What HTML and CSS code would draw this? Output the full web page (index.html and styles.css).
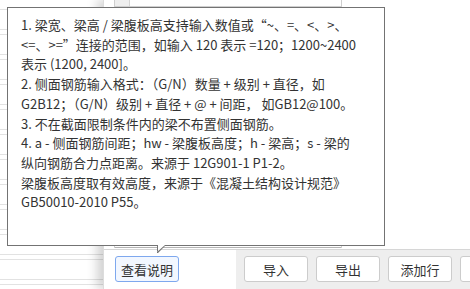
FILE: index.html
```html
<!DOCTYPE html>
<html lang="zh-CN">
<head>
    <meta charset="UTF-8">
    <title>侧面钢筋设置</title>
    <link rel="stylesheet" href="styles.css">
</head>
<body>
    <div class="page">
        <!-- 左侧表格 -->
        <div class="list">
            <div class="row"></div><div class="row"></div><div class="row"></div><div class="row"></div>
            <div class="row"></div><div class="row"></div><div class="row"></div><div class="row"></div>
            <div class="row"></div><div class="row"></div><div class="row"></div><div class="row"></div>
        </div>

        <!-- 右侧面板 -->
        <div class="panel">
            <div class="panel-body">
                <div class="grid">
                    <div class="grid-head">
                        <span class="cell-index"></span>
                    </div>
                    <div class="grid-body"></div>
                    <div class="grid-foot"></div>
                </div>
            </div>
            <div class="footer">
                <div class="footer-left">
                    <button class="btn btn-help">查看说明</button>
                </div>
                <div class="footer-right">
                    <button class="btn">导入</button>
                    <button class="btn">导出</button>
                    <button class="btn">添加行</button>
                    <button class="btn">删除</button>
                </div>
            </div>
        </div>

        <!-- 说明提示框 -->
        <div class="tooltip">
            <p>1. 梁宽、梁高 / 梁腹板高支持输入数值或“~、=、&lt;、&gt;、<br>&lt;=、&gt;=”连接的范围，如输入 120 表示 =120；1200~2400<br>表示 (1200, 2400]。</p>
            <p>2. 侧面钢筋输入格式：（G/N）数量 + 级别 + 直径，如<br>G2B12；（G/N）级别 + 直径 + @ + 间距， 如GB12@100。</p>
            <p>3. 不在截面限制条件内的梁不布置侧面钢筋。</p>
            <p>4. a - 侧面钢筋间距；hw - 梁腹板高度；h - 梁高；s - 梁的<br>纵向钢筋合力点距离。来源于 12G901-1 P1-2。</p>
            <p>梁腹板高度取有效高度，来源于《混凝土结构设计规范》<br>GB50010-2010 P55。</p>
        </div>
    </div>
</body>
</html>
```

FILE: styles.css
```css
body {
    margin: 0;
    background: #ffffff;
    font: 13px "Noto Sans CJK SC", "Noto Sans", sans-serif;
    color: #333333;
}

.page {
    position: relative;
    display: flex;
    width: 470px;
    height: 289px;
    overflow: hidden;
}

/* 左侧表格 */
.list {
    width: 103px;
    flex: none;
    padding-top: 9px;
    display: flex;
    flex-direction: column;
    gap: 4px;
}

.row {
    height: 19px;
    flex: none;
    border-top: 1px solid #e2e2e2;
    border-bottom: 1px solid #e2e2e2;
}

/* 右侧面板 */
.panel {
    flex: 1;
    display: flex;
    flex-direction: column;
    background: #ffffff;
    border-left: 1px solid #dcdcdc;
    box-shadow: -6px 0 10px rgba(0, 0, 0, 0.18);
}

.panel-body {
    flex: 1;
    padding-left: 10px;
}

.grid {
    width: 226px;
    height: 248px;
    border-left: 1px solid #cfcfcf;
    border-right: 1px solid #cfcfcf;
    display: flex;
    flex-direction: column;
}

.grid-head {
    height: 6px;
    border-bottom: 1px solid #cfcfcf;
    display: flex;
}

.cell-index {
    width: 14px;
    background: #eeeeee;
    border-right: 1px solid #d4d4d4;
}

.grid-body {
    flex: 1;
    border-bottom: 1px solid #e0e0e0;
}

.grid-foot {
    height: 8px;
    border-bottom: 1px solid #b5b5b5;
}

.footer {
    height: 39px;
    border-top: 1px solid #d6d6d6;
    display: flex;
}

.footer-left {
    width: 121px;
    padding: 6px 0 0 11px;
    background: #ffffff;
}

.footer-right {
    flex: 1;
    display: flex;
    gap: 8px;
    padding: 6px 0 0 8px;
    background: #eeeeee;
}

.btn {
    width: 64px;
    height: 26px;
    flex: none;
    padding: 0;
    border: 1px solid #cccccc;
    border-radius: 3px;
    background: #ffffff;
    font: 13px "Noto Sans CJK SC", "Noto Sans", sans-serif;
    color: #333333;
}

.btn-help {
    border-color: #7ea8ee;
    background: #f2f7ff;
}

/* 提示框 */
.tooltip {
    position: absolute;
    left: 7px;
    top: 7px;
    width: 363px;
    height: 230px;
    padding: 7px 0 0 13px;
    background: #ffffff;
    border: 1px solid #737373;
    line-height: 19.7px;
    white-space: nowrap;
}

.tooltip p {
    margin: 0;
}

.tooltip::after {
    content: "";
    position: absolute;
    left: 149px;
    bottom: -7px;
    width: 7px;
    height: 7px;
    background: #ffffff;
    border-left: 1px solid #737373;
    clip-path: polygon(0 0, 100% 0, 0 100%);
}

.tooltip::before {
    content: "";
    position: absolute;
    left: 149px;
    bottom: -8px;
    width: 9px;
    height: 8px;
    background: #737373;
    clip-path: polygon(0 0, 100% 0, 1px 100%, 0 100%);
}
```
